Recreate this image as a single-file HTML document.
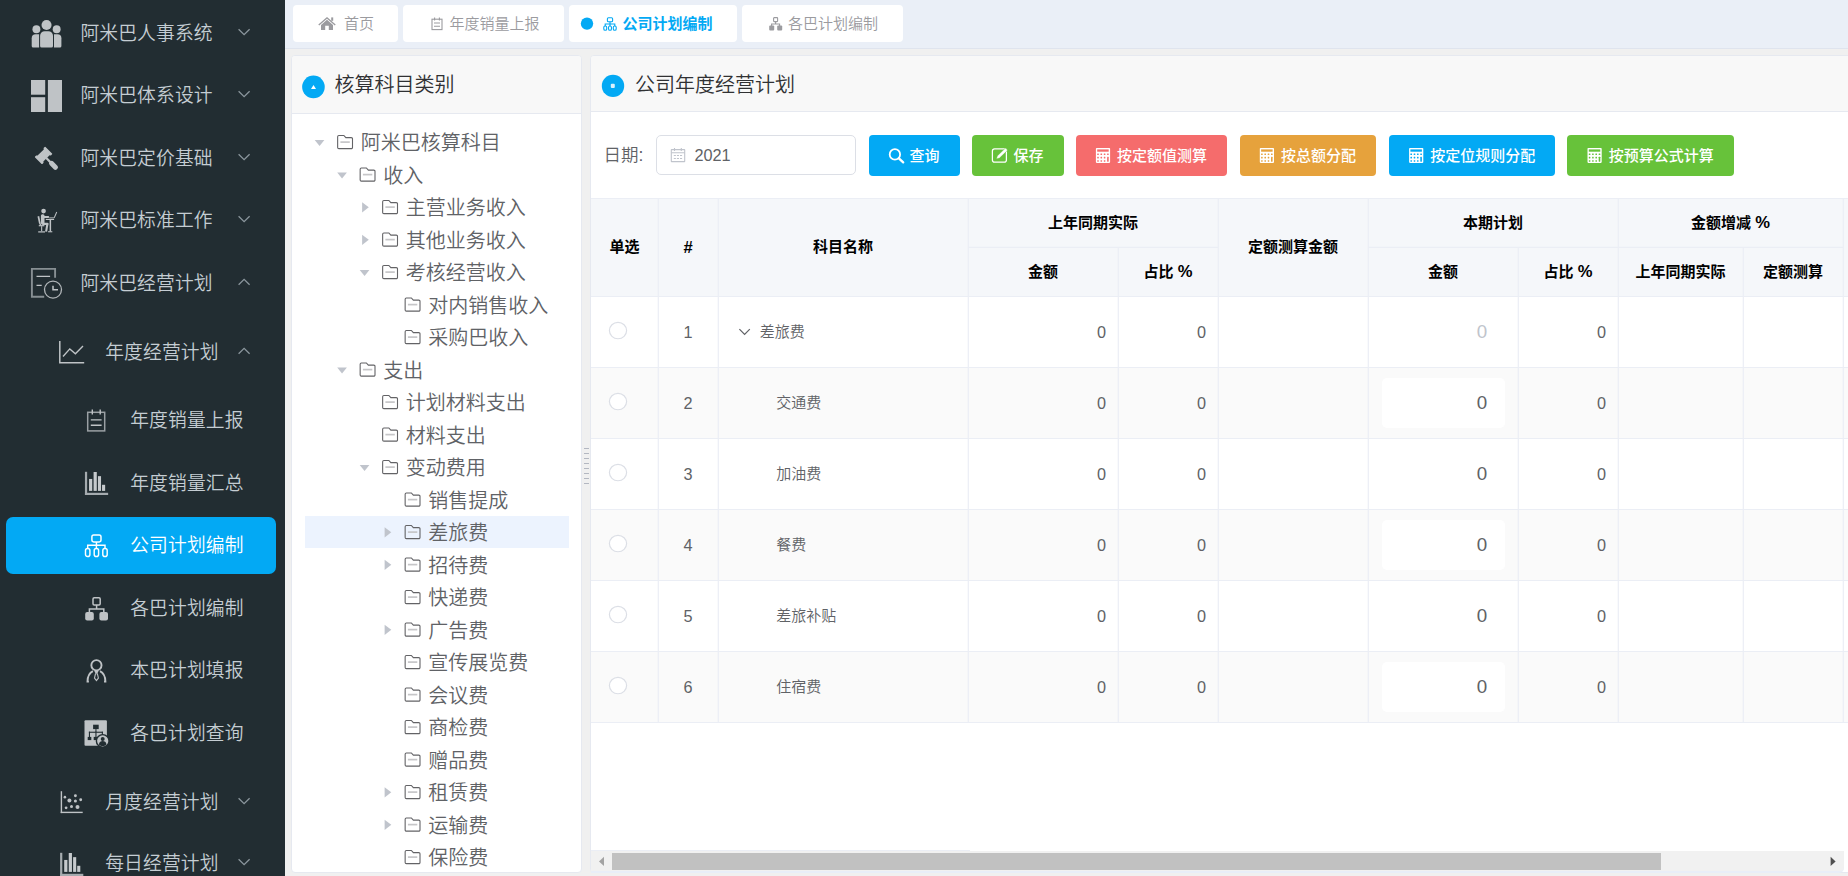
<!DOCTYPE html>
<html lang="zh-CN"><head><meta charset="utf-8"><title>公司计划编制</title>
<style>
html,body{margin:0;padding:0;}
body{width:1848px;height:876px;overflow:hidden;position:relative;background:#f0f0f0;font-family:"Liberation Sans","Noto Sans CJK SC",sans-serif;}
body div,body svg{position:absolute;box-sizing:border-box;}
.t{white-space:nowrap;}
</style></head><body>
<div style="left:0px;top:0px;width:285px;height:876px;background:#222d32;"></div>
<div class="t" style="left:80.4px;top:19.76px;height:28px;line-height:28px;font-size:18.75px;letter-spacing:0px;color:#c5cdd3;font-weight:350;letter-spacing:0.15px;">阿米巴人事系统</div>
<svg style="left:0;top:0" width="285" height="876"><polyline points="238.6,29.3 244.1,34.7 249.6,29.3" fill="none" stroke="#8b969d" stroke-width="1.3"/></svg>
<div class="t" style="left:80.4px;top:81.76px;height:28px;line-height:28px;font-size:18.75px;letter-spacing:0px;color:#c5cdd3;font-weight:350;letter-spacing:0.15px;">阿米巴体系设计</div>
<svg style="left:0;top:0" width="285" height="876"><polyline points="238.6,91.3 244.1,96.7 249.6,91.3" fill="none" stroke="#8b969d" stroke-width="1.3"/></svg>
<div class="t" style="left:80.4px;top:144.76px;height:28px;line-height:28px;font-size:18.75px;letter-spacing:0px;color:#c5cdd3;font-weight:350;letter-spacing:0.15px;">阿米巴定价基础</div>
<svg style="left:0;top:0" width="285" height="876"><polyline points="238.6,154.3 244.1,159.7 249.6,154.3" fill="none" stroke="#8b969d" stroke-width="1.3"/></svg>
<div class="t" style="left:80.4px;top:206.76px;height:28px;line-height:28px;font-size:18.75px;letter-spacing:0px;color:#c5cdd3;font-weight:350;letter-spacing:0.15px;">阿米巴标准工作</div>
<svg style="left:0;top:0" width="285" height="876"><polyline points="238.6,216.3 244.1,221.7 249.6,216.3" fill="none" stroke="#8b969d" stroke-width="1.3"/></svg>
<div class="t" style="left:80.4px;top:269.76px;height:28px;line-height:28px;font-size:18.75px;letter-spacing:0px;color:#c5cdd3;font-weight:350;letter-spacing:0.15px;">阿米巴经营计划</div>
<svg style="left:0;top:0" width="285" height="876"><polyline points="238.6,284.7 244.1,279.3 249.6,284.7" fill="none" stroke="#8b969d" stroke-width="1.3"/></svg>
<div class="t" style="left:105.2px;top:338.76px;height:28px;line-height:28px;font-size:18.75px;letter-spacing:0px;color:#c5cdd3;font-weight:350;letter-spacing:0.15px;">年度经营计划</div>
<svg style="left:0;top:0" width="285" height="876"><polyline points="238.6,353.7 244.1,348.3 249.6,353.7" fill="none" stroke="#8b969d" stroke-width="1.3"/></svg>
<div style="left:6px;top:517px;width:270px;height:57px;background:#03a9f4;border-radius:7px;"></div>
<div class="t" style="left:130.2px;top:406.76px;height:28px;line-height:28px;font-size:18.75px;letter-spacing:0px;color:#c5cdd3;font-weight:350;letter-spacing:0.15px;">年度销量上报</div>
<div class="t" style="left:130.2px;top:469.76px;height:28px;line-height:28px;font-size:18.75px;letter-spacing:0px;color:#c5cdd3;font-weight:350;letter-spacing:0.15px;">年度销量汇总</div>
<div class="t" style="left:130.2px;top:531.76px;height:28px;line-height:28px;font-size:18.75px;letter-spacing:0px;color:#ffffff;font-weight:350;letter-spacing:0.15px;">公司计划编制</div>
<div class="t" style="left:130.2px;top:594.76px;height:28px;line-height:28px;font-size:18.75px;letter-spacing:0px;color:#c5cdd3;font-weight:350;letter-spacing:0.15px;">各巴计划编制</div>
<div class="t" style="left:130.2px;top:656.76px;height:28px;line-height:28px;font-size:18.75px;letter-spacing:0px;color:#c5cdd3;font-weight:350;letter-spacing:0.15px;">本巴计划填报</div>
<div class="t" style="left:130.2px;top:719.76px;height:28px;line-height:28px;font-size:18.75px;letter-spacing:0px;color:#c5cdd3;font-weight:350;letter-spacing:0.15px;">各巴计划查询</div>
<div class="t" style="left:105.2px;top:788.76px;height:28px;line-height:28px;font-size:18.75px;letter-spacing:0px;color:#c5cdd3;font-weight:350;letter-spacing:0.15px;">月度经营计划</div>
<svg style="left:0;top:0" width="285" height="876"><polyline points="238.6,798.3 244.1,803.7 249.6,798.3" fill="none" stroke="#8b969d" stroke-width="1.3"/></svg>
<div class="t" style="left:105.2px;top:849.76px;height:28px;line-height:28px;font-size:18.75px;letter-spacing:0px;color:#c5cdd3;font-weight:350;letter-spacing:0.15px;">每日经营计划</div>
<svg style="left:0;top:0" width="285" height="876"><polyline points="238.6,859.3 244.1,864.7 249.6,859.3" fill="none" stroke="#8b969d" stroke-width="1.3"/></svg>
<svg style="left:0;top:0" width="285" height="876" viewBox="0 0 285 876"><g fill="#bfc3c6"><circle cx="46.54" cy="24.95" r="5.05"/><circle cx="36.4" cy="29.3" r="3.95"/><circle cx="56.65" cy="29.3" r="3.95"/><path d="M40.1 46V35.8a4.6 4.6 0 0 1 4.6-4.6h3.7a4.6 4.6 0 0 1 4.6 4.6V46a1.5 1.5 0 0 1-1.5 1.5H41.6a1.5 1.5 0 0 1-1.5-1.5z"/><path d="M31.7 46V38.3a4 4 0 0 1 4-4H39.1V47.5H33.2a1.5 1.5 0 0 1-1.5-1.5z"/><path d="M61.4 46V38.3a4 4 0 0 0-4-4H54V47.5h5.9a1.5 1.5 0 0 0 1.5-1.5z"/></g><g fill="#bfc3c6"><rect x="31" y="80" width="14.2" height="14.7"/><rect x="31" y="97.2" width="14.2" height="14.8"/><rect x="47.9" y="80" width="14.1" height="32"/></g><g fill="#bfc3c6" transform="translate(43.57 155.41) rotate(45)"><path d="M-4.6 -7.4H4.6a.6 .6 0 0 1 .6 .6V-5.2L4.1 -4.4V4.4L5.2 5.2V6.8a.6 .6 0 0 1 -.6 .6H-4.6a.6 .6 0 0 1 -.6 -.6V5.2L-4.1 4.4V-4.4L-5.2 -5.2V-6.8a.6 .6 0 0 1 .6 -.6z"/><rect x="3.8" y="-1.1" width="6.4" height="2.2"/><rect x="9" y="-2.5" width="10.2" height="5" rx="2.2"/></g><g fill="#bfc3c6"><circle cx="43.56" cy="211.04" r="2.35"/><rect x="40.9" y="214.2" width="3.6" height="10.4" rx="1.5"/><rect x="43" y="216.1" width="6.2" height="1.9" rx="0.8"/><rect x="42" y="222.8" width="6.4" height="2.2" rx="1"/><path d="M46.4 223.2l2.2 0.3-1.5 8.3-2-0.2z"/><path d="M37.5 216.4l1.7-0.3 1.4 7-1.6 0.3z"/><rect x="38.8" y="225.1" width="5.6" height="1.2"/><path d="M39 223l1.4-0.3 1 2.6-1.4 0.2z"/><rect x="41.1" y="226.2" width="1.1" height="5"/><rect x="38.2" y="231.3" width="6.8" height="1.2"/><rect x="45.8" y="218.9" width="8.3" height="1.1"/><rect x="49.6" y="219.8" width="1.5" height="11.6"/><rect x="48.1" y="231.2" width="4.2" height="1.1"/><rect x="49.3" y="217.4" width="5" height="0.9"/><path d="M53.8 217.6l2.5-5.8 0.9 0.4-2.5 5.8z"/></g><g fill="none" stroke="#bfc3c6"><path d="M44.2 296.8H31.9V268.9H55.1V277.8" stroke="#878f93" stroke-width="1.9"/><path d="M36.5 276.4H50.1M36.5 285.4H41.7" stroke-width="1.3"/><circle cx="53" cy="289.6" r="8.5" stroke="#b0b5b8" stroke-width="1.3"/><path d="M53 285.8V289.8H58" stroke-width="1.5"/></g><g fill="none" stroke="#bfc3c6" stroke-width="1.5"><path d="M59.8 341V362.7H84.2"/><path d="M63 356.5l6.8-7.6 5.6 4.8 7.6-7.6" stroke-width="1.4"/></g><g fill="none" stroke="#bfc3c6" stroke-width="1.4"><rect x="87.7" y="412.3" width="17" height="18.6" stroke="#9aa0a4" stroke-width="1.5"/><path d="M92.3 409.4V414.5M100.2 409.4V414.5M90.8 419.9H101.6M90.8 425.2H101.6"/></g><rect x="84.94" y="471.8" width="2.2" height="23.2" fill="#a5abaf"/><rect x="84.94" y="492.8" width="23.2" height="2.2" fill="#a5abaf"/><g fill="#c6cacd"><rect x="89.04" y="478.95" width="3.2" height="11.95"/><rect x="93.59" y="472.0" width="3.2" height="18.9"/><rect x="97.94" y="476.15" width="3.1" height="14.75"/><rect x="102.04" y="484.8" width="3.1" height="6.1"/></g><g fill="none" stroke="#ffffff" stroke-width="1.45" transform="translate(84.7 534.2)"><rect x="7.2" y="0.8" width="9.1" height="6.9" rx="1.8"/><path d="M11.75 7.7V11.1M3 14.2V11.1H20.3V14.2M11.7 11.1V14.2"/><rect x="0.8" y="14.2" width="4.4" height="8.1" rx="2.1"/><rect x="9.5" y="14.2" width="4.4" height="8.1" rx="2.1"/><rect x="18.1" y="14.2" width="4.4" height="8.1" rx="2.1"/></g><g transform="translate(84.8 597)"><rect x="8.2" y="0.8" width="7.2" height="7.2" rx="1.2" fill="none" stroke="#bfc3c6" stroke-width="1.5"/><path d="M11.8 8V12M4.6 15.5V12H19V15.5" fill="none" stroke="#bfc3c6" stroke-width="1.5"/><rect x="0.4" y="15" width="8.6" height="8.4" rx="2" fill="#bfc3c6"/><rect x="14.6" y="15" width="8.6" height="8.4" rx="2" fill="#bfc3c6"/></g><g fill="none" stroke="#bfc3c6" stroke-width="1.9"><circle cx="96.44" cy="665.23" r="5.1"/><path d="M92.9 671.1C89.6 672.7 87.6 676.4 87.5 681.6h1.4M100 671.1C103.3 672.7 105.3 676.4 105.4 681.6h-1.4"/><path d="M94.2 670.7H98.7L97.6 673H95.3z" fill="#bfc3c6" stroke="none"/><path d="M95.5 673.7L94.5 678.1L96.44 680.7L98.4 678.1L97.4 673.7z" stroke-width="1.1"/></g><g transform="translate(84.5 720.3)"><rect x="0" y="0" width="22.4" height="25.4" rx="1" fill="#bfc3c6"/><g fill="#222d32"><rect x="8.6" y="4.4" width="5.6" height="4.4"/><rect x="10.9" y="8.8" width="1.1" height="3"/><rect x="4.4" y="11.4" width="14" height="1.1"/><rect x="4.4" y="11.4" width="1.1" height="5.4"/><rect x="17.3" y="11.4" width="1.1" height="3"/><rect x="10.9" y="11.4" width="1.1" height="5.4"/><rect x="3.2" y="16.6" width="3.6" height="3.2"/><rect x="9.2" y="16.6" width="3.6" height="3.2"/></g><circle cx="18.2" cy="20.6" r="7" fill="#222d32"/><circle cx="18.2" cy="20.6" r="5.6" fill="#bfc3c6"/><circle cx="18.2" cy="18.6" r="2" fill="#222d32"/><path d="M14.4 24.2c0.4-2.6 2-3.4 3.8-3.4s3.4 0.8 3.8 3.4c-1 1-2.4 1.6-3.8 1.6s-2.8-0.6-3.8-1.6z" fill="#222d32"/></g><g fill="#bfc3c6"><rect x="60.7" y="791.2" width="1.4" height="21.9"/><rect x="60.7" y="811.7" width="22" height="1.4"/><circle cx="64.9" cy="797.15" r="1.3"/><circle cx="69.4" cy="800.4" r="2.0"/><circle cx="75.4" cy="795.8" r="1.45"/><circle cx="75.4" cy="801.06" r="1.55"/><circle cx="80.7" cy="799.8" r="1.45"/><circle cx="66.1" cy="807.8" r="1.4"/><circle cx="71.5" cy="806.4" r="1.5"/><circle cx="77.5" cy="807.1" r="2.0"/></g><rect x="60.1" y="852.8" width="2.2" height="23.2" fill="#a5abaf"/><rect x="60.1" y="873.8" width="23.2" height="2.2" fill="#a5abaf"/><g fill="#c6cacd"><rect x="64.2" y="859.95" width="3.2" height="11.95"/><rect x="68.75" y="853.0" width="3.2" height="18.9"/><rect x="73.1" y="857.15" width="3.1" height="14.75"/><rect x="77.2" y="865.8" width="3.1" height="6.1"/></g></svg>
<div style="left:285px;top:0px;width:1563px;height:49px;background:#eaeff7;border-bottom:1px solid #dfe4ee;"></div>
<div style="left:293px;top:5px;width:105px;height:37px;background:#fff;border-radius:4px;"></div>
<div style="left:403px;top:5px;width:161px;height:37px;background:#fff;border-radius:4px;"></div>
<div style="left:569px;top:5px;width:168px;height:37px;background:#fff;border-radius:4px;"></div>
<div style="left:742px;top:5px;width:161px;height:37px;background:#fff;border-radius:4px;"></div>
<div class="t" style="left:344px;top:12.85px;height:22px;line-height:22px;font-size:15.0px;letter-spacing:0px;color:#9b9b9f;font-weight:350;">首页</div>
<div class="t" style="left:449.5px;top:12.85px;height:22px;line-height:22px;font-size:15.0px;letter-spacing:0px;color:#9b9b9f;font-weight:350;">年度销量上报</div>
<div class="t" style="left:622.5px;top:12.85px;height:22px;line-height:22px;font-size:15.0px;letter-spacing:0px;color:#03a9f4;font-weight:700;">公司计划编制</div>
<div class="t" style="left:788px;top:12.85px;height:22px;line-height:22px;font-size:15.0px;letter-spacing:0px;color:#9b9b9f;font-weight:350;">各巴计划编制</div>
<svg style="left:0;top:0" width="1000" height="48" viewBox="0 0 1000 48"><g fill="#9b9b9f"><path d="M327 17l8.7 7.4-0.9 1-7.8-6.6-7.8 6.6-0.9-1z"/><path d="M327 19.8l6 5.1v5h-4.2v-4.2h-3.6v4.2H321v-5z"/><rect x="331.2" y="17.4" width="2" height="3.4"/></g><g fill="none" stroke="#9b9b9f" stroke-width="1.1"><rect x="432" y="19.2" width="10" height="10.4"/><path d="M434.6 17.4V20.6M439.4 17.4V20.6M434 23H440M434 26.2H440"/></g><circle cx="587" cy="23.6" r="6.2" fill="#03a9f4"/><g fill="none" stroke="#03a9f4" stroke-width="1.1" transform="translate(603.2 17.2)"><rect x="4.2" y="0.6" width="5.2" height="4" rx="1"/><path d="M6.8 4.6V6.8M2 8.8V6.8H11.6V8.8M6.8 6.8V8.8"/><rect x="0.6" y="8.8" width="2.9" height="4.2" rx="1.3"/><rect x="5.35" y="8.8" width="2.9" height="4.2" rx="1.3"/><rect x="10.1" y="8.8" width="2.9" height="4.2" rx="1.3"/></g><g transform="translate(769 17)"><rect x="4.6" y="0.6" width="4" height="4" rx="0.6" fill="none" stroke="#9b9b9f" stroke-width="1.1"/><path d="M6.6 4.6V7M2.6 9V7H10.6V9" fill="none" stroke="#9b9b9f" stroke-width="1.1"/><rect x="0.2" y="8.6" width="5" height="4.8" rx="1" fill="#9b9b9f"/><rect x="8.2" y="8.6" width="5" height="4.8" rx="1" fill="#9b9b9f"/></g></svg>
<div style="left:291px;top:55px;width:291px;height:817.6px;background:#fff;border:1px solid #e6e9f0;border-radius:4px;"></div>
<div style="left:292px;top:56px;width:289px;height:58px;background:#f8f8f8;border-bottom:1px solid #e6e9f0;border-radius:3px 3px 0 0;"></div>
<div class="t" style="left:334.5px;top:70.0px;height:30px;line-height:30px;font-size:20.0px;letter-spacing:0px;color:#303133;font-weight:350;">核算科目类别</div>
<svg style="left:300px;top:74px" width="26" height="26" viewBox="300 74 26 26"><circle cx="313.45" cy="86.9" r="11.3" fill="#03a9f4"/><path d="M311 88.9l2.5-3.9 2.5 3.9z" fill="#fff"/></svg>
<div style="left:305px;top:516.2px;width:264px;height:32.3px;background:#ecf3fe;"></div>
<div class="t" style="left:360.7px;top:128.0px;height:30px;line-height:30px;font-size:20.0px;letter-spacing:0px;color:#606266;font-weight:350;">阿米巴核算科目</div>
<div class="t" style="left:383.2px;top:160.5px;height:30px;line-height:30px;font-size:20.0px;letter-spacing:0px;color:#606266;font-weight:350;">收入</div>
<div class="t" style="left:405.7px;top:193.0px;height:30px;line-height:30px;font-size:20.0px;letter-spacing:0px;color:#606266;font-weight:350;">主营业务收入</div>
<div class="t" style="left:405.7px;top:225.5px;height:30px;line-height:30px;font-size:20.0px;letter-spacing:0px;color:#606266;font-weight:350;">其他业务收入</div>
<div class="t" style="left:405.7px;top:258.0px;height:30px;line-height:30px;font-size:20.0px;letter-spacing:0px;color:#606266;font-weight:350;">考核经营收入</div>
<div class="t" style="left:428.2px;top:290.5px;height:30px;line-height:30px;font-size:20.0px;letter-spacing:0px;color:#606266;font-weight:350;">对内销售收入</div>
<div class="t" style="left:428.2px;top:323.0px;height:30px;line-height:30px;font-size:20.0px;letter-spacing:0px;color:#606266;font-weight:350;">采购巴收入</div>
<div class="t" style="left:383.2px;top:355.5px;height:30px;line-height:30px;font-size:20.0px;letter-spacing:0px;color:#606266;font-weight:350;">支出</div>
<div class="t" style="left:405.7px;top:388.0px;height:30px;line-height:30px;font-size:20.0px;letter-spacing:0px;color:#606266;font-weight:350;">计划材料支出</div>
<div class="t" style="left:405.7px;top:420.5px;height:30px;line-height:30px;font-size:20.0px;letter-spacing:0px;color:#606266;font-weight:350;">材料支出</div>
<div class="t" style="left:405.7px;top:453.0px;height:30px;line-height:30px;font-size:20.0px;letter-spacing:0px;color:#606266;font-weight:350;">变动费用</div>
<div class="t" style="left:428.2px;top:485.5px;height:30px;line-height:30px;font-size:20.0px;letter-spacing:0px;color:#606266;font-weight:350;">销售提成</div>
<div class="t" style="left:428.2px;top:518.0px;height:30px;line-height:30px;font-size:20.0px;letter-spacing:0px;color:#606266;font-weight:350;">差旅费</div>
<div class="t" style="left:428.2px;top:550.5px;height:30px;line-height:30px;font-size:20.0px;letter-spacing:0px;color:#606266;font-weight:350;">招待费</div>
<div class="t" style="left:428.2px;top:583.0px;height:30px;line-height:30px;font-size:20.0px;letter-spacing:0px;color:#606266;font-weight:350;">快递费</div>
<div class="t" style="left:428.2px;top:615.5px;height:30px;line-height:30px;font-size:20.0px;letter-spacing:0px;color:#606266;font-weight:350;">广告费</div>
<div class="t" style="left:428.2px;top:648.0px;height:30px;line-height:30px;font-size:20.0px;letter-spacing:0px;color:#606266;font-weight:350;">宣传展览费</div>
<div class="t" style="left:428.2px;top:680.5px;height:30px;line-height:30px;font-size:20.0px;letter-spacing:0px;color:#606266;font-weight:350;">会议费</div>
<div class="t" style="left:428.2px;top:713.0px;height:30px;line-height:30px;font-size:20.0px;letter-spacing:0px;color:#606266;font-weight:350;">商检费</div>
<div class="t" style="left:428.2px;top:745.5px;height:30px;line-height:30px;font-size:20.0px;letter-spacing:0px;color:#606266;font-weight:350;">赠品费</div>
<div class="t" style="left:428.2px;top:778.0px;height:30px;line-height:30px;font-size:20.0px;letter-spacing:0px;color:#606266;font-weight:350;">租赁费</div>
<div class="t" style="left:428.2px;top:810.5px;height:30px;line-height:30px;font-size:20.0px;letter-spacing:0px;color:#606266;font-weight:350;">运输费</div>
<div class="t" style="left:428.2px;top:843.0px;height:30px;line-height:30px;font-size:20.0px;letter-spacing:0px;color:#606266;font-weight:350;">保险费</div>
<svg style="left:293px;top:114px" width="288" height="762" viewBox="293 114 288 762"><path d="M337.65 147.4V136.64999999999998a1.2 1.2 0 0 1 1.2-1.2H343.84999999999997l2 2.2H351.3a1.2 1.2 0 0 1 1.2 1.2V147.4a1.2 1.2 0 0 1-1.2 1.2H338.84999999999997a1.2 1.2 0 0 1-1.2-1.2z" fill="none" stroke="#636366" stroke-width="1.1"/><path d="M340.4 142.1h9.4" stroke="#c6c6c8" stroke-width="1.7"/><path d="M314.7 139.9h9.7l-4.85 6.1z" fill="#c0c4cc"/><path d="M360.15 179.9V169.14999999999998a1.2 1.2 0 0 1 1.2-1.2H366.34999999999997l2 2.2H373.8a1.2 1.2 0 0 1 1.2 1.2V179.9a1.2 1.2 0 0 1-1.2 1.2H361.34999999999997a1.2 1.2 0 0 1-1.2-1.2z" fill="none" stroke="#636366" stroke-width="1.1"/><path d="M362.9 174.6h9.4" stroke="#c6c6c8" stroke-width="1.7"/><path d="M337.2 172.4h9.7l-4.85 6.1z" fill="#c0c4cc"/><path d="M382.65 212.4V201.64999999999998a1.2 1.2 0 0 1 1.2-1.2H388.84999999999997l2 2.2H396.3a1.2 1.2 0 0 1 1.2 1.2V212.4a1.2 1.2 0 0 1-1.2 1.2H383.84999999999997a1.2 1.2 0 0 1-1.2-1.2z" fill="none" stroke="#636366" stroke-width="1.1"/><path d="M385.4 207.1h9.4" stroke="#c6c6c8" stroke-width="1.7"/><path d="M362.1 202.3v10.1l6.7-5.05z" fill="#c0c4cc"/><path d="M382.65 244.9V234.14999999999998a1.2 1.2 0 0 1 1.2-1.2H388.84999999999997l2 2.2H396.3a1.2 1.2 0 0 1 1.2 1.2V244.9a1.2 1.2 0 0 1-1.2 1.2H383.84999999999997a1.2 1.2 0 0 1-1.2-1.2z" fill="none" stroke="#636366" stroke-width="1.1"/><path d="M385.4 239.6h9.4" stroke="#c6c6c8" stroke-width="1.7"/><path d="M362.1 234.8v10.1l6.7-5.05z" fill="#c0c4cc"/><path d="M382.65 277.40000000000003V266.65a1.2 1.2 0 0 1 1.2-1.2H388.84999999999997l2 2.2H396.3a1.2 1.2 0 0 1 1.2 1.2V277.40000000000003a1.2 1.2 0 0 1-1.2 1.2H383.84999999999997a1.2 1.2 0 0 1-1.2-1.2z" fill="none" stroke="#636366" stroke-width="1.1"/><path d="M385.4 272.1h9.4" stroke="#c6c6c8" stroke-width="1.7"/><path d="M359.7 269.9h9.7l-4.85 6.1z" fill="#c0c4cc"/><path d="M405.15 309.90000000000003V299.15a1.2 1.2 0 0 1 1.2-1.2H411.34999999999997l2 2.2H418.8a1.2 1.2 0 0 1 1.2 1.2V309.90000000000003a1.2 1.2 0 0 1-1.2 1.2H406.34999999999997a1.2 1.2 0 0 1-1.2-1.2z" fill="none" stroke="#636366" stroke-width="1.1"/><path d="M407.9 304.6h9.4" stroke="#c6c6c8" stroke-width="1.7"/><path d="M405.15 342.40000000000003V331.65a1.2 1.2 0 0 1 1.2-1.2H411.34999999999997l2 2.2H418.8a1.2 1.2 0 0 1 1.2 1.2V342.40000000000003a1.2 1.2 0 0 1-1.2 1.2H406.34999999999997a1.2 1.2 0 0 1-1.2-1.2z" fill="none" stroke="#636366" stroke-width="1.1"/><path d="M407.9 337.1h9.4" stroke="#c6c6c8" stroke-width="1.7"/><path d="M360.15 374.90000000000003V364.15a1.2 1.2 0 0 1 1.2-1.2H366.34999999999997l2 2.2H373.8a1.2 1.2 0 0 1 1.2 1.2V374.90000000000003a1.2 1.2 0 0 1-1.2 1.2H361.34999999999997a1.2 1.2 0 0 1-1.2-1.2z" fill="none" stroke="#636366" stroke-width="1.1"/><path d="M362.9 369.6h9.4" stroke="#c6c6c8" stroke-width="1.7"/><path d="M337.2 367.4h9.7l-4.85 6.1z" fill="#c0c4cc"/><path d="M382.65 407.40000000000003V396.65a1.2 1.2 0 0 1 1.2-1.2H388.84999999999997l2 2.2H396.3a1.2 1.2 0 0 1 1.2 1.2V407.40000000000003a1.2 1.2 0 0 1-1.2 1.2H383.84999999999997a1.2 1.2 0 0 1-1.2-1.2z" fill="none" stroke="#636366" stroke-width="1.1"/><path d="M385.4 402.1h9.4" stroke="#c6c6c8" stroke-width="1.7"/><path d="M382.65 439.90000000000003V429.15a1.2 1.2 0 0 1 1.2-1.2H388.84999999999997l2 2.2H396.3a1.2 1.2 0 0 1 1.2 1.2V439.90000000000003a1.2 1.2 0 0 1-1.2 1.2H383.84999999999997a1.2 1.2 0 0 1-1.2-1.2z" fill="none" stroke="#636366" stroke-width="1.1"/><path d="M385.4 434.6h9.4" stroke="#c6c6c8" stroke-width="1.7"/><path d="M382.65 472.40000000000003V461.65a1.2 1.2 0 0 1 1.2-1.2H388.84999999999997l2 2.2H396.3a1.2 1.2 0 0 1 1.2 1.2V472.40000000000003a1.2 1.2 0 0 1-1.2 1.2H383.84999999999997a1.2 1.2 0 0 1-1.2-1.2z" fill="none" stroke="#636366" stroke-width="1.1"/><path d="M385.4 467.1h9.4" stroke="#c6c6c8" stroke-width="1.7"/><path d="M359.7 464.9h9.7l-4.85 6.1z" fill="#c0c4cc"/><path d="M405.15 504.90000000000003V494.15a1.2 1.2 0 0 1 1.2-1.2H411.34999999999997l2 2.2H418.8a1.2 1.2 0 0 1 1.2 1.2V504.90000000000003a1.2 1.2 0 0 1-1.2 1.2H406.34999999999997a1.2 1.2 0 0 1-1.2-1.2z" fill="none" stroke="#636366" stroke-width="1.1"/><path d="M407.9 499.6h9.4" stroke="#c6c6c8" stroke-width="1.7"/><path d="M405.15 537.4V526.6500000000001a1.2 1.2 0 0 1 1.2-1.2H411.34999999999997l2 2.2H418.8a1.2 1.2 0 0 1 1.2 1.2V537.4a1.2 1.2 0 0 1-1.2 1.2H406.34999999999997a1.2 1.2 0 0 1-1.2-1.2z" fill="none" stroke="#636366" stroke-width="1.1"/><path d="M407.9 532.1h9.4" stroke="#c6c6c8" stroke-width="1.7"/><path d="M384.6 527.3v10.1l6.7-5.05z" fill="#c0c4cc"/><path d="M405.15 569.9V559.1500000000001a1.2 1.2 0 0 1 1.2-1.2H411.34999999999997l2 2.2H418.8a1.2 1.2 0 0 1 1.2 1.2V569.9a1.2 1.2 0 0 1-1.2 1.2H406.34999999999997a1.2 1.2 0 0 1-1.2-1.2z" fill="none" stroke="#636366" stroke-width="1.1"/><path d="M407.9 564.6h9.4" stroke="#c6c6c8" stroke-width="1.7"/><path d="M384.6 559.8v10.1l6.7-5.05z" fill="#c0c4cc"/><path d="M405.15 602.4V591.6500000000001a1.2 1.2 0 0 1 1.2-1.2H411.34999999999997l2 2.2H418.8a1.2 1.2 0 0 1 1.2 1.2V602.4a1.2 1.2 0 0 1-1.2 1.2H406.34999999999997a1.2 1.2 0 0 1-1.2-1.2z" fill="none" stroke="#636366" stroke-width="1.1"/><path d="M407.9 597.1h9.4" stroke="#c6c6c8" stroke-width="1.7"/><path d="M405.15 634.9V624.1500000000001a1.2 1.2 0 0 1 1.2-1.2H411.34999999999997l2 2.2H418.8a1.2 1.2 0 0 1 1.2 1.2V634.9a1.2 1.2 0 0 1-1.2 1.2H406.34999999999997a1.2 1.2 0 0 1-1.2-1.2z" fill="none" stroke="#636366" stroke-width="1.1"/><path d="M407.9 629.6h9.4" stroke="#c6c6c8" stroke-width="1.7"/><path d="M384.6 624.8v10.1l6.7-5.05z" fill="#c0c4cc"/><path d="M405.15 667.4V656.6500000000001a1.2 1.2 0 0 1 1.2-1.2H411.34999999999997l2 2.2H418.8a1.2 1.2 0 0 1 1.2 1.2V667.4a1.2 1.2 0 0 1-1.2 1.2H406.34999999999997a1.2 1.2 0 0 1-1.2-1.2z" fill="none" stroke="#636366" stroke-width="1.1"/><path d="M407.9 662.1h9.4" stroke="#c6c6c8" stroke-width="1.7"/><path d="M405.15 699.9V689.1500000000001a1.2 1.2 0 0 1 1.2-1.2H411.34999999999997l2 2.2H418.8a1.2 1.2 0 0 1 1.2 1.2V699.9a1.2 1.2 0 0 1-1.2 1.2H406.34999999999997a1.2 1.2 0 0 1-1.2-1.2z" fill="none" stroke="#636366" stroke-width="1.1"/><path d="M407.9 694.6h9.4" stroke="#c6c6c8" stroke-width="1.7"/><path d="M405.15 732.4V721.6500000000001a1.2 1.2 0 0 1 1.2-1.2H411.34999999999997l2 2.2H418.8a1.2 1.2 0 0 1 1.2 1.2V732.4a1.2 1.2 0 0 1-1.2 1.2H406.34999999999997a1.2 1.2 0 0 1-1.2-1.2z" fill="none" stroke="#636366" stroke-width="1.1"/><path d="M407.9 727.1h9.4" stroke="#c6c6c8" stroke-width="1.7"/><path d="M405.15 764.9V754.1500000000001a1.2 1.2 0 0 1 1.2-1.2H411.34999999999997l2 2.2H418.8a1.2 1.2 0 0 1 1.2 1.2V764.9a1.2 1.2 0 0 1-1.2 1.2H406.34999999999997a1.2 1.2 0 0 1-1.2-1.2z" fill="none" stroke="#636366" stroke-width="1.1"/><path d="M407.9 759.6h9.4" stroke="#c6c6c8" stroke-width="1.7"/><path d="M405.15 797.4V786.6500000000001a1.2 1.2 0 0 1 1.2-1.2H411.34999999999997l2 2.2H418.8a1.2 1.2 0 0 1 1.2 1.2V797.4a1.2 1.2 0 0 1-1.2 1.2H406.34999999999997a1.2 1.2 0 0 1-1.2-1.2z" fill="none" stroke="#636366" stroke-width="1.1"/><path d="M407.9 792.1h9.4" stroke="#c6c6c8" stroke-width="1.7"/><path d="M384.6 787.3v10.1l6.7-5.05z" fill="#c0c4cc"/><path d="M405.15 829.9V819.1500000000001a1.2 1.2 0 0 1 1.2-1.2H411.34999999999997l2 2.2H418.8a1.2 1.2 0 0 1 1.2 1.2V829.9a1.2 1.2 0 0 1-1.2 1.2H406.34999999999997a1.2 1.2 0 0 1-1.2-1.2z" fill="none" stroke="#636366" stroke-width="1.1"/><path d="M407.9 824.6h9.4" stroke="#c6c6c8" stroke-width="1.7"/><path d="M384.6 819.8v10.1l6.7-5.05z" fill="#c0c4cc"/><path d="M405.15 862.4V851.6500000000001a1.2 1.2 0 0 1 1.2-1.2H411.34999999999997l2 2.2H418.8a1.2 1.2 0 0 1 1.2 1.2V862.4a1.2 1.2 0 0 1-1.2 1.2H406.34999999999997a1.2 1.2 0 0 1-1.2-1.2z" fill="none" stroke="#636366" stroke-width="1.1"/><path d="M407.9 857.1h9.4" stroke="#c6c6c8" stroke-width="1.7"/></svg>
<svg style="left:582px;top:440px" width="8" height="50" viewBox="582 440 8 50"><rect x="584" y="448" width="5" height="1" fill="#b3b7c1"/><rect x="584" y="453" width="5" height="1" fill="#b3b7c1"/><rect x="584" y="458" width="5" height="1" fill="#b3b7c1"/><rect x="584" y="463" width="5" height="1" fill="#b3b7c1"/><rect x="584" y="468" width="5" height="1" fill="#b3b7c1"/><rect x="584" y="473" width="5" height="1" fill="#b3b7c1"/><rect x="584" y="478" width="5" height="1" fill="#b3b7c1"/><rect x="584" y="483" width="5" height="1" fill="#b3b7c1"/></svg>
<div style="left:590px;top:55px;width:1301px;height:817.6px;background:#fff;border:1px solid #e6e9f0;border-radius:4px;"></div>
<div style="left:591px;top:56px;width:1299px;height:56px;background:#f8f8f8;border-bottom:1px solid #e6e9f0;border-radius:3px 0 0 0;"></div>
<div class="t" style="left:635px;top:70.0px;height:30px;line-height:30px;font-size:20.0px;letter-spacing:0px;color:#303133;font-weight:350;">公司年度经营计划</div>
<svg style="left:600px;top:73px" width="26" height="26" viewBox="600 73 26 26"><circle cx="613" cy="85.9" r="11.2" fill="#03a9f4"/><rect x="610.8" y="83.8" width="4" height="4.2" rx="1" fill="#d9f1fd"/></svg>
<div class="t" style="left:603.4px;top:142.33px;height:26px;line-height:26px;font-size:17.5px;letter-spacing:0px;color:#606266;font-weight:350;">日期:</div>
<div style="left:656px;top:135px;width:200px;height:40px;background:#fff;border:1px solid #dcdfe6;border-radius:5px;"></div>
<div class="t" style="left:694.5px;top:143.4px;height:24px;line-height:24px;font-size:16.25px;letter-spacing:0px;color:#606266;">2021</div>
<svg style="left:669px;top:146px" width="18" height="18" viewBox="669 146 18 18"><g fill="none" stroke="#c0c4cc" stroke-width="1.1"><rect x="671.3" y="149.6" width="13.4" height="12" rx="0.3"/><path d="M671.3 152.7H684.7M674.5 147.9V151M681.3 147.9V151"/><path d="M673.8 155.5H675.9M676.9 155.5H679M680 155.5H682.1M673.8 158.5H675.9M676.9 158.5H679M680 158.5H682.1" stroke-width="1"/></g></svg>
<div style="left:869px;top:135px;width:91px;height:40.6px;background:#03a9f4;border-radius:4px;"></div>
<div class="t" style="left:909.6px;top:144.75px;height:22px;line-height:22px;font-size:15.0px;letter-spacing:0px;color:#fff;font-weight:500;">查询</div>
<div style="left:972px;top:135px;width:92px;height:40.6px;background:#67c23a;border-radius:4px;"></div>
<div class="t" style="left:1013.6px;top:144.75px;height:22px;line-height:22px;font-size:15.0px;letter-spacing:0px;color:#fff;font-weight:500;">保存</div>
<div style="left:1076px;top:135px;width:151px;height:40.6px;background:#f56c6c;border-radius:4px;"></div>
<div class="t" style="left:1117.1px;top:144.75px;height:22px;line-height:22px;font-size:15.0px;letter-spacing:0px;color:#fff;font-weight:500;">按定额值测算</div>
<div style="left:1240px;top:135px;width:136px;height:40.6px;background:#e6a23c;border-radius:4px;"></div>
<div class="t" style="left:1281px;top:144.75px;height:22px;line-height:22px;font-size:15.0px;letter-spacing:0px;color:#fff;font-weight:500;">按总额分配</div>
<div style="left:1389px;top:135px;width:166px;height:40.6px;background:#03a9f4;border-radius:4px;"></div>
<div class="t" style="left:1430.3px;top:144.75px;height:22px;line-height:22px;font-size:15.0px;letter-spacing:0px;color:#fff;font-weight:500;">按定位规则分配</div>
<div style="left:1567px;top:135px;width:167px;height:40.6px;background:#67c23a;border-radius:4px;"></div>
<div class="t" style="left:1608.7px;top:144.75px;height:22px;line-height:22px;font-size:15.0px;letter-spacing:0px;color:#fff;font-weight:500;">按预算公式计算</div>
<svg style="left:860px;top:130px" width="900" height="50" viewBox="860 130 900 50"><g fill="none" stroke="#fff"><circle cx="894.9" cy="154.4" r="5.2" stroke-width="1.8"/><path d="M898.9 158.3L903.2 162.4" stroke-linecap="round" stroke-width="2.3"/></g><rect x="992.4" y="148.9" width="14" height="13.2" rx="2.2" fill="none" stroke="#fff" stroke-width="1.25"/><path d="M996.4 158.9l0.9-3 7.6-7.3a0.9 0.9 0 0 1 1.3 0l0.9 0.9a0.9 0.9 0 0 1 0 1.3l-7.6 7.3z" fill="#fff" stroke="#67c23a" stroke-width="0.5"/><rect x="1095.9" y="148.05" width="14.2" height="14.85" rx="0.8" fill="#fff"/><g fill="#f56c6c"><rect x="1097.2" y="149.4" width="11.5" height="2.3"/><rect x="1097.2" y="153.45" width="1.6" height="1.6" rx="0.4"/><rect x="1100.5" y="153.45" width="1.6" height="1.6" rx="0.4"/><rect x="1103.8" y="153.45" width="1.6" height="1.6" rx="0.4"/><rect x="1107.1" y="153.45" width="1.6" height="1.6" rx="0.4"/><rect x="1097.2" y="156.8" width="1.6" height="1.6" rx="0.4"/><rect x="1100.5" y="156.8" width="1.6" height="1.6" rx="0.4"/><rect x="1103.8" y="156.8" width="1.6" height="1.6" rx="0.4"/><rect x="1107.1" y="156.8" width="1.6" height="4.95" rx="0.4"/><rect x="1097.2" y="160.15" width="1.6" height="1.6" rx="0.4"/><rect x="1100.5" y="160.15" width="1.6" height="1.6" rx="0.4"/><rect x="1103.8" y="160.15" width="1.6" height="1.6" rx="0.4"/></g><rect x="1259.8" y="148.05" width="14.2" height="14.85" rx="0.8" fill="#fff"/><g fill="#e6a23c"><rect x="1261.1" y="149.4" width="11.5" height="2.3"/><rect x="1261.1" y="153.45" width="1.6" height="1.6" rx="0.4"/><rect x="1264.4" y="153.45" width="1.6" height="1.6" rx="0.4"/><rect x="1267.7" y="153.45" width="1.6" height="1.6" rx="0.4"/><rect x="1271.0" y="153.45" width="1.6" height="1.6" rx="0.4"/><rect x="1261.1" y="156.8" width="1.6" height="1.6" rx="0.4"/><rect x="1264.4" y="156.8" width="1.6" height="1.6" rx="0.4"/><rect x="1267.7" y="156.8" width="1.6" height="1.6" rx="0.4"/><rect x="1271.0" y="156.8" width="1.6" height="4.95" rx="0.4"/><rect x="1261.1" y="160.15" width="1.6" height="1.6" rx="0.4"/><rect x="1264.4" y="160.15" width="1.6" height="1.6" rx="0.4"/><rect x="1267.7" y="160.15" width="1.6" height="1.6" rx="0.4"/></g><rect x="1409.1" y="148.05" width="14.2" height="14.85" rx="0.8" fill="#fff"/><g fill="#03a9f4"><rect x="1410.3999999999999" y="149.4" width="11.5" height="2.3"/><rect x="1410.4" y="153.45" width="1.6" height="1.6" rx="0.4"/><rect x="1413.7" y="153.45" width="1.6" height="1.6" rx="0.4"/><rect x="1417.0" y="153.45" width="1.6" height="1.6" rx="0.4"/><rect x="1420.3" y="153.45" width="1.6" height="1.6" rx="0.4"/><rect x="1410.4" y="156.8" width="1.6" height="1.6" rx="0.4"/><rect x="1413.7" y="156.8" width="1.6" height="1.6" rx="0.4"/><rect x="1417.0" y="156.8" width="1.6" height="1.6" rx="0.4"/><rect x="1420.3" y="156.8" width="1.6" height="4.95" rx="0.4"/><rect x="1410.4" y="160.15" width="1.6" height="1.6" rx="0.4"/><rect x="1413.7" y="160.15" width="1.6" height="1.6" rx="0.4"/><rect x="1417.0" y="160.15" width="1.6" height="1.6" rx="0.4"/></g><rect x="1587.5" y="148.05" width="14.2" height="14.85" rx="0.8" fill="#fff"/><g fill="#67c23a"><rect x="1588.8" y="149.4" width="11.5" height="2.3"/><rect x="1588.8" y="153.45" width="1.6" height="1.6" rx="0.4"/><rect x="1592.1" y="153.45" width="1.6" height="1.6" rx="0.4"/><rect x="1595.4" y="153.45" width="1.6" height="1.6" rx="0.4"/><rect x="1598.7" y="153.45" width="1.6" height="1.6" rx="0.4"/><rect x="1588.8" y="156.8" width="1.6" height="1.6" rx="0.4"/><rect x="1592.1" y="156.8" width="1.6" height="1.6" rx="0.4"/><rect x="1595.4" y="156.8" width="1.6" height="1.6" rx="0.4"/><rect x="1598.7" y="156.8" width="1.6" height="4.95" rx="0.4"/><rect x="1588.8" y="160.15" width="1.6" height="1.6" rx="0.4"/><rect x="1592.1" y="160.15" width="1.6" height="1.6" rx="0.4"/><rect x="1595.4" y="160.15" width="1.6" height="1.6" rx="0.4"/></g></svg>
<div style="left:591px;top:198px;width:1300px;height:98.5px;background:#f5f7fa;"></div>
<div style="left:591px;top:367.5px;width:1300px;height:71px;background:#fafafa;"></div>
<div style="left:591px;top:509.5px;width:1300px;height:71px;background:#fafafa;"></div>
<div style="left:591px;top:651.5px;width:1300px;height:71px;background:#fafafa;"></div>
<svg style="left:591px;top:190px" width="1257" height="540" viewBox="591 190 1257 540"><path d="M591 198.5H1900M591 296.5H1900" stroke="#ebeef5" stroke-width="1.2"/><path d="M968 247.3H1218" stroke="#ebeef5" stroke-width="1.2"/><path d="M1368 247.3H1843" stroke="#ebeef5" stroke-width="1.2"/><path d="M591 367.5H1900" stroke="#ebeef5" stroke-width="1.2"/><path d="M591 438.5H1900" stroke="#ebeef5" stroke-width="1.2"/><path d="M591 509.5H1900" stroke="#ebeef5" stroke-width="1.2"/><path d="M591 580.5H1900" stroke="#ebeef5" stroke-width="1.2"/><path d="M591 651.5H1900" stroke="#ebeef5" stroke-width="1.2"/><path d="M591 722.5H1900" stroke="#ebeef5" stroke-width="1.2"/><path d="M658.3 198V722.5" stroke="#ebeef5" stroke-width="1.2"/><path d="M718.3 198V722.5" stroke="#ebeef5" stroke-width="1.2"/><path d="M968.3 198V722.5" stroke="#ebeef5" stroke-width="1.2"/><path d="M1218.3 198V722.5" stroke="#ebeef5" stroke-width="1.2"/><path d="M1368.3 198V722.5" stroke="#ebeef5" stroke-width="1.2"/><path d="M1618.3 198V722.5" stroke="#ebeef5" stroke-width="1.2"/><path d="M1843.3 198V722.5" stroke="#ebeef5" stroke-width="1.2"/><path d="M1118.3 247V722.5" stroke="#ebeef5" stroke-width="1.2"/><path d="M1518.3 247V722.5" stroke="#ebeef5" stroke-width="1.2"/><path d="M1743.3 247V722.5" stroke="#ebeef5" stroke-width="1.2"/></svg>
<div class="t" style="left:591px;top:236.15px;height:22px;line-height:22px;font-size:15.0px;letter-spacing:0px;color:#000;font-weight:700;width:67px;text-align:center;">单选</div>
<div class="t" style="left:658px;top:236.5px;height:22px;line-height:22px;font-size:15.0px;letter-spacing:0px;color:#000;font-weight:700;width:60px;text-align:center;"><span style="font-size:16.6px">#</span></div>
<div class="t" style="left:718px;top:236.15px;height:22px;line-height:22px;font-size:15.0px;letter-spacing:0px;color:#000;font-weight:700;width:250px;text-align:center;">科目名称</div>
<div class="t" style="left:968px;top:212.05px;height:22px;line-height:22px;font-size:15.0px;letter-spacing:0px;color:#000;font-weight:700;width:250px;text-align:center;">上年同期实际</div>
<div class="t" style="left:968px;top:260.85px;height:22px;line-height:22px;font-size:15.0px;letter-spacing:0px;color:#000;font-weight:700;width:150px;text-align:center;">金额</div>
<div class="t" style="left:1118px;top:260.85px;height:22px;line-height:22px;font-size:15.0px;letter-spacing:0px;color:#000;font-weight:700;width:100px;text-align:center;">占比 <span style="font-size:16.6px">%</span></div>
<div class="t" style="left:1218px;top:236.15px;height:22px;line-height:22px;font-size:15.0px;letter-spacing:0px;color:#000;font-weight:700;width:150px;text-align:center;">定额测算金额</div>
<div class="t" style="left:1368px;top:212.05px;height:22px;line-height:22px;font-size:15.0px;letter-spacing:0px;color:#000;font-weight:700;width:250px;text-align:center;">本期计划</div>
<div class="t" style="left:1368px;top:260.85px;height:22px;line-height:22px;font-size:15.0px;letter-spacing:0px;color:#000;font-weight:700;width:150px;text-align:center;">金额</div>
<div class="t" style="left:1518px;top:260.85px;height:22px;line-height:22px;font-size:15.0px;letter-spacing:0px;color:#000;font-weight:700;width:100px;text-align:center;">占比 <span style="font-size:16.6px">%</span></div>
<div class="t" style="left:1618px;top:212.05px;height:22px;line-height:22px;font-size:15.0px;letter-spacing:0px;color:#000;font-weight:700;width:225px;text-align:center;">金额增减 <span style="font-size:16.6px">%</span></div>
<div class="t" style="left:1618px;top:260.85px;height:22px;line-height:22px;font-size:15.0px;letter-spacing:0px;color:#000;font-weight:700;width:125px;text-align:center;">上年同期实际</div>
<div class="t" style="left:1743px;top:260.85px;height:22px;line-height:22px;font-size:15.0px;letter-spacing:0px;color:#000;font-weight:700;width:100px;text-align:center;">定额测算</div>
<div class="t" style="left:658px;top:319.7px;height:24px;line-height:24px;font-size:16.25px;letter-spacing:0px;color:#606266;width:60px;text-align:center;">1</div>
<div class="t" style="left:759.7px;top:321.15px;height:22px;line-height:22px;font-size:15.0px;letter-spacing:0px;color:#606266;font-weight:350;">差旅费</div>
<div class="t" style="left:1000px;top:319.7px;height:24px;line-height:24px;font-size:16.25px;letter-spacing:0px;color:#606266;width:106px;text-align:right;">0</div>
<div class="t" style="left:1118px;top:319.7px;height:24px;line-height:24px;font-size:16.25px;letter-spacing:0px;color:#606266;width:88px;text-align:right;">0</div>
<div class="t" style="left:1380px;top:317.9px;height:28px;line-height:28px;font-size:18.75px;letter-spacing:0px;color:#c0c4cc;width:107.2px;text-align:right;">0</div>
<div class="t" style="left:1518px;top:319.7px;height:24px;line-height:24px;font-size:16.25px;letter-spacing:0px;color:#606266;width:88px;text-align:right;">0</div>
<div class="t" style="left:658px;top:390.7px;height:24px;line-height:24px;font-size:16.25px;letter-spacing:0px;color:#606266;width:60px;text-align:center;">2</div>
<div class="t" style="left:776.3px;top:392.15px;height:22px;line-height:22px;font-size:15.0px;letter-spacing:0px;color:#606266;font-weight:350;">交通费</div>
<div class="t" style="left:1000px;top:390.7px;height:24px;line-height:24px;font-size:16.25px;letter-spacing:0px;color:#606266;width:106px;text-align:right;">0</div>
<div class="t" style="left:1118px;top:390.7px;height:24px;line-height:24px;font-size:16.25px;letter-spacing:0px;color:#606266;width:88px;text-align:right;">0</div>
<div style="left:1382px;top:378.3px;width:123px;height:50px;background:#fff;border-radius:5px;"></div>
<div class="t" style="left:1380px;top:388.9px;height:28px;line-height:28px;font-size:18.75px;letter-spacing:0px;color:#606266;width:107.2px;text-align:right;">0</div>
<div class="t" style="left:1518px;top:390.7px;height:24px;line-height:24px;font-size:16.25px;letter-spacing:0px;color:#606266;width:88px;text-align:right;">0</div>
<div class="t" style="left:658px;top:461.7px;height:24px;line-height:24px;font-size:16.25px;letter-spacing:0px;color:#606266;width:60px;text-align:center;">3</div>
<div class="t" style="left:776.3px;top:463.15px;height:22px;line-height:22px;font-size:15.0px;letter-spacing:0px;color:#606266;font-weight:350;">加油费</div>
<div class="t" style="left:1000px;top:461.7px;height:24px;line-height:24px;font-size:16.25px;letter-spacing:0px;color:#606266;width:106px;text-align:right;">0</div>
<div class="t" style="left:1118px;top:461.7px;height:24px;line-height:24px;font-size:16.25px;letter-spacing:0px;color:#606266;width:88px;text-align:right;">0</div>
<div class="t" style="left:1380px;top:459.9px;height:28px;line-height:28px;font-size:18.75px;letter-spacing:0px;color:#606266;width:107.2px;text-align:right;">0</div>
<div class="t" style="left:1518px;top:461.7px;height:24px;line-height:24px;font-size:16.25px;letter-spacing:0px;color:#606266;width:88px;text-align:right;">0</div>
<div class="t" style="left:658px;top:532.7px;height:24px;line-height:24px;font-size:16.25px;letter-spacing:0px;color:#606266;width:60px;text-align:center;">4</div>
<div class="t" style="left:776.3px;top:534.15px;height:22px;line-height:22px;font-size:15.0px;letter-spacing:0px;color:#606266;font-weight:350;">餐费</div>
<div class="t" style="left:1000px;top:532.7px;height:24px;line-height:24px;font-size:16.25px;letter-spacing:0px;color:#606266;width:106px;text-align:right;">0</div>
<div class="t" style="left:1118px;top:532.7px;height:24px;line-height:24px;font-size:16.25px;letter-spacing:0px;color:#606266;width:88px;text-align:right;">0</div>
<div style="left:1382px;top:520.3px;width:123px;height:50px;background:#fff;border-radius:5px;"></div>
<div class="t" style="left:1380px;top:530.9px;height:28px;line-height:28px;font-size:18.75px;letter-spacing:0px;color:#606266;width:107.2px;text-align:right;">0</div>
<div class="t" style="left:1518px;top:532.7px;height:24px;line-height:24px;font-size:16.25px;letter-spacing:0px;color:#606266;width:88px;text-align:right;">0</div>
<div class="t" style="left:658px;top:603.7px;height:24px;line-height:24px;font-size:16.25px;letter-spacing:0px;color:#606266;width:60px;text-align:center;">5</div>
<div class="t" style="left:776.3px;top:605.15px;height:22px;line-height:22px;font-size:15.0px;letter-spacing:0px;color:#606266;font-weight:350;">差旅补贴</div>
<div class="t" style="left:1000px;top:603.7px;height:24px;line-height:24px;font-size:16.25px;letter-spacing:0px;color:#606266;width:106px;text-align:right;">0</div>
<div class="t" style="left:1118px;top:603.7px;height:24px;line-height:24px;font-size:16.25px;letter-spacing:0px;color:#606266;width:88px;text-align:right;">0</div>
<div class="t" style="left:1380px;top:601.9px;height:28px;line-height:28px;font-size:18.75px;letter-spacing:0px;color:#606266;width:107.2px;text-align:right;">0</div>
<div class="t" style="left:1518px;top:603.7px;height:24px;line-height:24px;font-size:16.25px;letter-spacing:0px;color:#606266;width:88px;text-align:right;">0</div>
<div class="t" style="left:658px;top:674.7px;height:24px;line-height:24px;font-size:16.25px;letter-spacing:0px;color:#606266;width:60px;text-align:center;">6</div>
<div class="t" style="left:776.3px;top:676.15px;height:22px;line-height:22px;font-size:15.0px;letter-spacing:0px;color:#606266;font-weight:350;">住宿费</div>
<div class="t" style="left:1000px;top:674.7px;height:24px;line-height:24px;font-size:16.25px;letter-spacing:0px;color:#606266;width:106px;text-align:right;">0</div>
<div class="t" style="left:1118px;top:674.7px;height:24px;line-height:24px;font-size:16.25px;letter-spacing:0px;color:#606266;width:88px;text-align:right;">0</div>
<div style="left:1382px;top:662.3px;width:123px;height:50px;background:#fff;border-radius:5px;"></div>
<div class="t" style="left:1380px;top:672.9px;height:28px;line-height:28px;font-size:18.75px;letter-spacing:0px;color:#606266;width:107.2px;text-align:right;">0</div>
<div class="t" style="left:1518px;top:674.7px;height:24px;line-height:24px;font-size:16.25px;letter-spacing:0px;color:#606266;width:88px;text-align:right;">0</div>
<svg style="left:591px;top:296px" width="200" height="430" viewBox="591 296 200 430"><ellipse cx="618" cy="330.55" rx="8.6" ry="8.2" fill="#fff" stroke="#dcdfe6" stroke-width="1.2"/><polyline points="739.4,329.09999999999997 744.6,334.5 749.8,329.09999999999997" fill="none" stroke="#606266" stroke-width="1.2"/><ellipse cx="618" cy="401.55" rx="8.6" ry="8.2" fill="#fff" stroke="#dcdfe6" stroke-width="1.2"/><ellipse cx="618" cy="472.55" rx="8.6" ry="8.2" fill="#fff" stroke="#dcdfe6" stroke-width="1.2"/><ellipse cx="618" cy="543.55" rx="8.6" ry="8.2" fill="#fff" stroke="#dcdfe6" stroke-width="1.2"/><ellipse cx="618" cy="614.55" rx="8.6" ry="8.2" fill="#fff" stroke="#dcdfe6" stroke-width="1.2"/><ellipse cx="618" cy="685.55" rx="8.6" ry="8.2" fill="#fff" stroke="#dcdfe6" stroke-width="1.2"/></svg>
<div style="left:591px;top:849.6px;width:379px;height:1.2px;background:#ebeef5;"></div>
<div style="left:591px;top:851px;width:1252.6px;height:21.6px;background:#e9eef8;border-radius:0 0 5px 0;"></div>
<div style="left:591px;top:851px;width:1252.6px;height:19.6px;background:#f1f1f1;border-radius:0 0 4px 0;"></div>
<div style="left:612px;top:853px;width:1049px;height:17px;background:#c1c1c1;"></div>
<svg style="left:592px;top:851px" width="1256" height="20" viewBox="592 851 1256 20"><path d="M599 861.4l5-4.6v9.2z" fill="#a3a3a3"/><path d="M1835.6 861.4l-5-4.6v9.2z" fill="#505050"/></svg>
<div style="left:285px;top:873px;width:1563px;height:3px;background:#f0f0f0;"></div>
</body></html>
